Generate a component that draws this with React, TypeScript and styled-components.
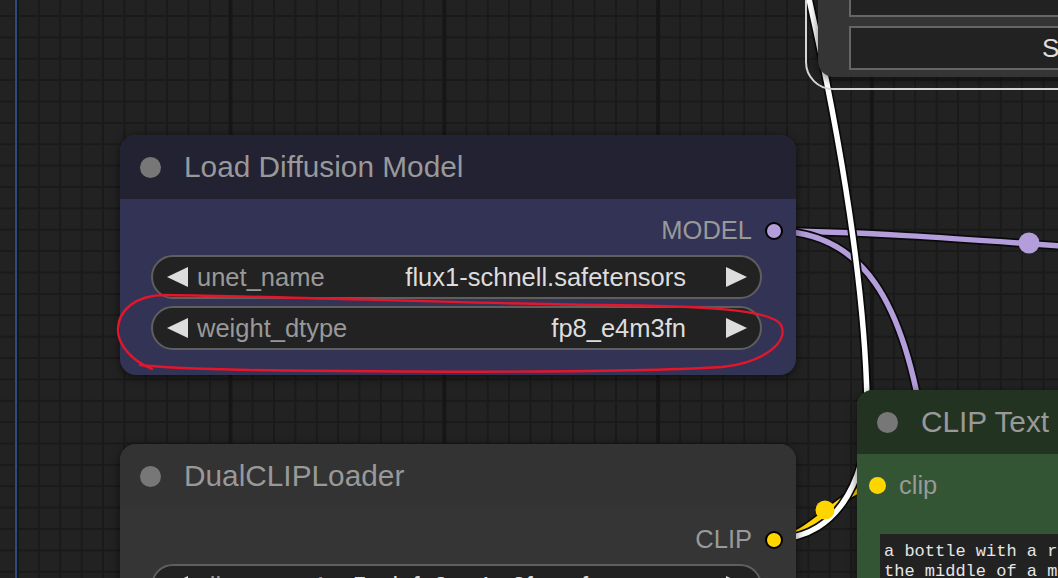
import React from "react";
import styled, { createGlobalStyle } from "styled-components";

const GlobalStyle = createGlobalStyle`
  html, body { margin: 0; padding: 0; background: #222; }
  body {
    width: 1058px; height: 578px; overflow: hidden;
    font-family: "Liberation Sans", Arial, sans-serif;
  }
`;

const Canvas = styled.div`
  position: relative;
  width: 1058px;
  height: 578px;
  overflow: hidden;
  background-color: #222222;
  background-image:
    linear-gradient(90deg, #161616 4px, transparent 4px),
    linear-gradient(90deg, #1a1a1a 2px, transparent 2px),
    linear-gradient(180deg, #1a1a1a 2px, transparent 2px);
  background-size: 213.8px 100%, 21.38px 100%, 100% 21.38px;
  background-position: 228.5px 0, 16.5px 0, 0 15px;
`;

const EdgeMarker = styled.div`
  position: absolute;
  left: 15px;
  top: 0;
  bottom: 0;
  width: 2px;
  background: #2d4b7d;
`;

const Layer = styled.svg`
  position: absolute;
  left: 0;
  top: 0;
  width: 1058px;
  height: 578px;
  pointer-events: none;
  overflow: visible;
`;

const Node = styled.div<{ $x: number; $y: number; $w: number; $bg: string }>`
  position: absolute;
  left: ${(p) => p.$x}px;
  top: ${(p) => p.$y}px;
  width: ${(p) => p.$w}px;
  background: ${(p) => p.$bg};
  border-radius: 16px;
  box-shadow: 0 2px 10px rgba(0, 0, 0, 0.55);
  display: flex;
  flex-direction: column;
`;

const SelectedNode = styled(Node)<{ $h: number }>`
  height: ${(p) => p.$h}px;
  justify-content: flex-end;
  gap: 9px;
  padding: 0 0 7px 31px;
  box-sizing: border-box;
  &::after {
    content: "";
    position: absolute;
    inset: -13px;
    border: 2px solid #d4d4d4;
    border-radius: 28px;
  }
`;

const Title = styled.div<{ $bg: string }>`
  height: 64px;
  flex: none;
  display: flex;
  align-items: center;
  gap: 23px;
  padding-left: 20px;
  background: ${(p) => p.$bg};
  border-radius: 16px 16px 0 0;
  color: #999;
  font-size: 29.8px;
  white-space: nowrap;
  overflow: hidden;
`;

const TitleDot = styled.span`
  width: 21px;
  height: 21px;
  border-radius: 50%;
  background: #777;
  flex: none;
`;

const Body = styled.div<{ $pb?: number }>`
  display: flex;
  flex-direction: column;
  padding: 10px 0 ${(p) => p.$pb ?? 0}px;
`;

const OutputRow = styled.div`
  height: 43px;
  display: flex;
  justify-content: flex-end;
  align-items: center;
  gap: 13px;
  padding-right: 13px;
  color: #999;
  font-size: 25.5px;
`;

const InputRow = styled.div`
  height: 43px;
  display: flex;
  align-items: center;
  gap: 13px;
  padding-left: 12px;
  color: #999;
  font-size: 25.5px;
`;

const SlotDot = styled.span<{ $color: string; $ring?: boolean }>`
  width: ${(p) => (p.$ring ? 14 : 17)}px;
  height: ${(p) => (p.$ring ? 14 : 17)}px;
  border-radius: 50%;
  background: ${(p) => p.$color};
  border: ${(p) => (p.$ring ? "2px solid #000" : "none")};
  flex: none;
`;

const WidgetList = styled.div`
  display: flex;
  flex-direction: column;
  gap: 7px;
  margin-top: 3px;
`;

const Widget = styled.div`
  height: 44px;
  box-sizing: border-box;
  margin: 0 34px 0 31px;
  padding: 0 13px 0 14px;
  border: 2px solid #5f5f5f;
  border-radius: 22px;
  background: #222;
  display: flex;
  align-items: center;
  font-size: 25.5px;
  white-space: nowrap;
`;

const Arrow = styled.span<{ $dir: "left" | "right" }>`
  width: 0;
  height: 0;
  flex: none;
  border-top: 10px solid transparent;
  border-bottom: 10px solid transparent;
  ${(p) =>
    p.$dir === "left"
      ? "border-right: 21px solid #ddd;"
      : "border-left: 21px solid #ddd;"}
`;

const WidgetLabel = styled.span`
  color: #999;
  margin-left: 9px;
  min-width: 0;
  overflow: hidden;
  text-overflow: ellipsis;
`;

const WidgetValue = styled.span`
  color: #ddd;
  flex: none;
  margin-left: auto;
  padding-left: 12px;
  margin-right: 40px;
`;

const BoxWidget = styled.div`
  height: 44px;
  width: 400px;
  box-sizing: border-box;
  border: 2px solid #666;
  background: #222;
  display: flex;
  align-items: center;
  padding-left: 191px;
  color: #ddd;
  font-size: 26px;
  white-space: nowrap;
  flex: none;
`;

const TextArea = styled.div`
  margin: 27px 0 0 23px;
  height: 120px;
  background: #222;
  padding: 8px 0 0 4px;
  color: #e6e6e6;
  font-family: "Liberation Mono", "DejaVu Sans Mono", monospace;
  font-size: 17px;
  line-height: 20px;
  white-space: pre;
  overflow: hidden;
`;

function Links() {
  return (
    <Layer viewBox="0 0 1058 578">
      <g fill="none" strokeLinecap="round">
        <path d="M774,231 C850,231 950,238 1075,247" stroke="#0a0a0a" strokeWidth={9} />
        <path d="M774,231 C850,231 950,238 1075,247" stroke="#b39ddb" strokeWidth={5.5} />
        <path d="M774,231 C862,231 905,300 925,440" stroke="#0a0a0a" strokeWidth={9} />
        <path d="M774,231 C862,231 905,300 925,440" stroke="#b39ddb" strokeWidth={5.5} />
        <path d="M774,539 C812,539 840,486 878,486" stroke="#0a0a0a" strokeWidth={9} />
        <path d="M774,539 C812,539 840,486 878,486" stroke="#ffd500" strokeWidth={5.5} />
        <path d="M774,539 C842,539 871,470 867,400 C865,300 845,150 800,-40" stroke="#0a0a0a" strokeWidth={9} />
        <path d="M774,539 C842,539 871,470 867,400 C865,300 845,150 800,-40" stroke="#ffffff" strokeWidth={5.5} />
      </g>
      <circle cx={1029} cy={243} r={10.5} fill="#b39ddb" />
      <circle cx={825} cy={510} r={9.5} fill="#ffd500" />
    </Layer>
  );
}

function Annotation() {
  return (
    <Layer viewBox="0 0 1058 578">
      <path
        d="M152,369 C134,362 118,346 118,330 C118,310 136,295 165,295 C300,297 450,303 600,305 C700,306 772,309 781,325 C789,341 766,362 722,367 C600,374 400,372 250,370 C200,369 165,368 140,365"
        fill="none"
        stroke="#e3162c"
        strokeWidth={2.4}
        strokeLinecap="round"
      />
    </Layer>
  );
}

export default function App() {
  return (
    <>
      <GlobalStyle />
      <Canvas>
        <EdgeMarker />
        <Links />

        <SelectedNode $x={818} $y={-300} $w={400} $h={377} $bg="#353535">
          <BoxWidget />
          <BoxWidget>Save</BoxWidget>
        </SelectedNode>

        <Node $x={120} $y={135} $w={676} $bg="#333355">
          <Title $bg="#222233">
            <TitleDot />
            Load Diffusion Model
          </Title>
          <Body $pb={25}>
            <OutputRow>
              MODEL
              <SlotDot $color="#b39ddb" $ring />
            </OutputRow>
            <WidgetList>
              <Widget>
                <Arrow $dir="left" />
                <WidgetLabel>unet_name</WidgetLabel>
                <WidgetValue>flux1-schnell.safetensors</WidgetValue>
                <Arrow $dir="right" />
              </Widget>
              <Widget>
                <Arrow $dir="left" />
                <WidgetLabel>weight_dtype</WidgetLabel>
                <WidgetValue>fp8_e4m3fn</WidgetValue>
                <Arrow $dir="right" />
              </Widget>
            </WidgetList>
          </Body>
        </Node>

        <Node $x={120} $y={444} $w={676} $bg="#353535">
          <Title $bg="#333333">
            <TitleDot />
            DualCLIPLoader
          </Title>
          <Body $pb={60}>
            <OutputRow>
              CLIP
              <SlotDot $color="#ffd500" $ring />
            </OutputRow>
            <WidgetList>
              <Widget>
                <Arrow $dir="left" />
                <WidgetLabel>clip_name1</WidgetLabel>
                <WidgetValue>t5xxl_fp8_e4m3fn.safetensors</WidgetValue>
                <Arrow $dir="right" />
              </Widget>
            </WidgetList>
          </Body>
        </Node>

        <Node $x={857} $y={390} $w={420} $bg="#335533">
          <Title $bg="#223322">
            <TitleDot />
            CLIP Text Encode (Prompt)
          </Title>
          <Body>
            <InputRow>
              <SlotDot $color="#ffd500" />
              clip
            </InputRow>
            <TextArea>
              {"a bottle with a rainbow galaxy inside it on top of a wooden table on a table in\nthe middle of a modern kitchen"}
            </TextArea>
          </Body>
        </Node>

        <Annotation />
      </Canvas>
    </>
  );
}
